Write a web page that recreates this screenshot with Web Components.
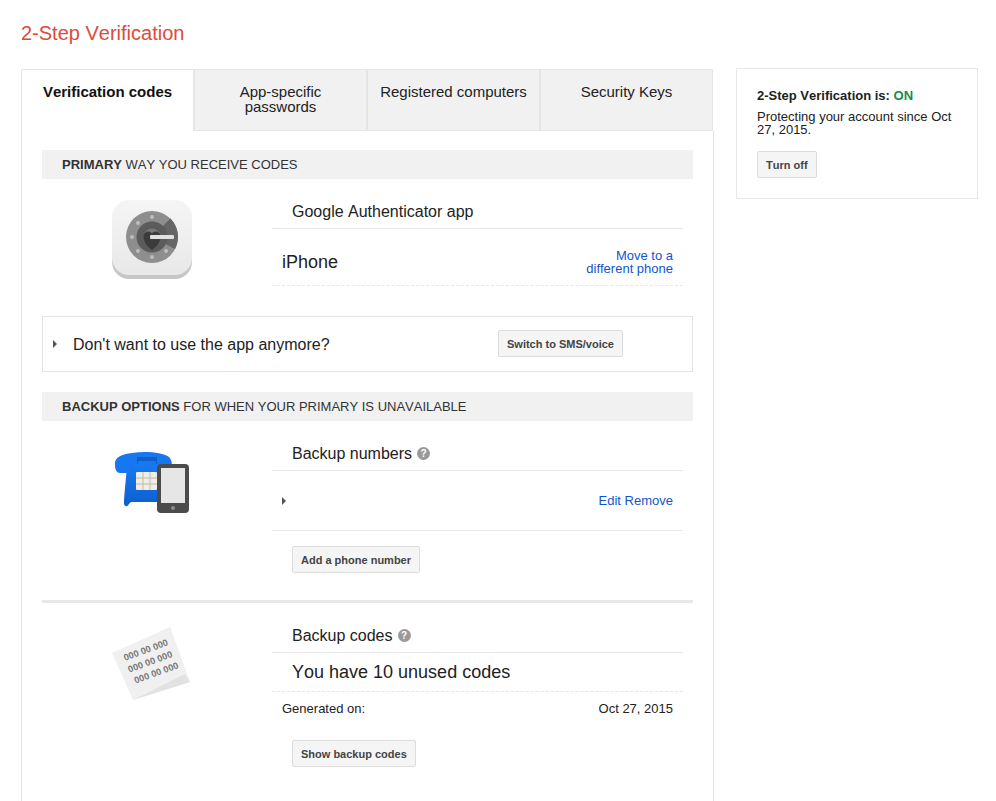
<!DOCTYPE html>
<html>
<head>
<meta charset="utf-8">
<title>2-Step Verification</title>
<style>
    html, body {
        margin: 0;
        height: 801px;
        overflow: hidden;
        background: #fff;
        font-family: "Liberation Sans", Arial, sans-serif;
        font-kerning: none;
        color: #222;
    }
    gv-status em { font-style: normal; color: #168a4f; }
</style>
</head>
<body>
<gv-page>
    <gv-tabs>
        <gv-tab active>Verification codes</gv-tab>
        <gv-tab>App-specific<br>passwords</gv-tab>
        <gv-tab>Registered computers</gv-tab>
        <gv-tab>Security Keys</gv-tab>
    </gv-tabs>

    <gv-card>
        <gv-section-header><b>PRIMARY</b> WAY YOU RECEIVE CODES</gv-section-header>
        <gv-method>
            <svg slot="icon" width="80" height="80" viewBox="0 0 80 80">
                <defs>
                    <linearGradient id="face" x1="0" y1="0" x2="0" y2="1">
                        <stop offset="0" stop-color="#f5f5f5"/>
                        <stop offset="1" stop-color="#e8e8e8"/>
                    </linearGradient>
                </defs>
                <rect x="0" y="3" width="80" height="76" rx="17" fill="#c6c6c6"/>
                <rect x="0" y="0" width="80" height="75" rx="17" fill="url(#face)"/>
                <circle cx="40" cy="37" r="26" fill="#8e8e8e"/>
                <path d="M58.400 18.600A26 26 0 0 1 63 49L40 37Z" fill="#656565"/>
                <g fill="#bdbdbd">
                    <circle cx="40" cy="17" r="2"/><circle cx="40" cy="57" r="2"/>
                    <circle cx="20" cy="37" r="2"/><circle cx="26" cy="23" r="2"/>
                    <circle cx="26" cy="51" r="2"/><circle cx="54" cy="51" r="2"/>
                </g>
                <circle cx="40" cy="37" r="15.500" fill="#5b5b5b"/>
                <circle cx="40" cy="37" r="8.500" fill="#777"/>
                <path d="M31.500 36C32 31 38 30 40 33.500C42 30 48 31 48.500 36C49 42 44 47 40 50C36 47 31 42 31.500 36Z" fill="#3b3b3b"/>
                <rect x="38" y="35" width="24" height="4" rx="1" fill="#e0e0e0"/>
            </svg>
            <gv-heading>Google Authenticator app</gv-heading>
            <gv-row dashed height="56" style="padding-top:10px;height:46px">
                <span class="large">iPhone</span>
                <gv-link slot="end">Move to a<br>different phone</gv-link>
            </gv-row>
        </gv-method>

        <gv-box>
            <gv-arrow></gv-arrow>
            <span>Don't want to use the app anymore?</span>
            <gv-button slot="action">Switch to SMS/voice</gv-button>
        </gv-box>

        <gv-section-header style="margin-top:20px"><b>BACKUP OPTIONS</b> FOR WHEN YOUR PRIMARY IS UNAVAILABLE</gv-section-header>
        <gv-method>
            <svg slot="icon" width="80" height="80" viewBox="0 0 80 80">
                <defs>
                    <linearGradient id="blue" x1="0" y1="0" x2="0" y2="1">
                        <stop offset="0" stop-color="#1b7bf0"/>
                        <stop offset="1" stop-color="#0c5fce"/>
                    </linearGradient>
                </defs>
                <path d="M15 26C18 24 20 22 22 20H48L60 28V60H20C18 60 17 62 16 63.500C14 65 12 64 12 61C12 56 14 34 15 26Z" fill="url(#blue)"/>
                <path d="M3 23C2 15 10 12 20 11C33 9 50 10 57 15C60 18 60 22 60 26H50C47 26 46 24 46 21H22C22 26 20 31 16 31H8C5 31 3 28 3 23Z" fill="#1677ee"/>
                <rect x="25" y="15" width="20" height="7" fill="#0f5fc8"/>
                <rect x="26" y="19" width="18" height="4" fill="#1677ee"/>
                <rect x="24" y="30" width="21" height="18" rx="1" fill="#efeee6"/>
                <path d="M24 36H45M24 42H45M31 30V48M38 30V48" stroke="#bdbbae" stroke-width="1"/>
                <rect x="45" y="22" width="32" height="49" rx="4" fill="#4b4b4b"/>
                <rect x="49" y="26" width="24" height="35" fill="#e6e6e6"/>
                <circle cx="61" cy="66" r="2" fill="#8a8a8a"/>
            </svg>
            <gv-heading>Backup numbers <gv-help></gv-help></gv-heading>
            <gv-row height="59">
                <gv-arrow></gv-arrow>
                <gv-link slot="end">Edit Remove</gv-link>
            </gv-row>
            <gv-button style="margin:15px 0 0 20px">Add a phone number</gv-button>
        </gv-method>

        <gv-divider></gv-divider>

        <gv-method>
            <svg slot="icon" width="80" height="80" viewBox="0 0 80 80">
                <polygon points="0,29 58,3 78,58 21,76" fill="#f0f0f0"/>
                <polygon points="21,76 78,58 73,50" fill="#e2e2e2"/>
                <g transform="translate(13 37) rotate(-20)" font-family="Liberation Sans, Arial, sans-serif" font-size="9.300" font-weight="700" fill="#777">
                    <text x="0" y="0">000 00 000</text>
                    <text x="0" y="12.500">000 00 000</text>
                    <text x="2" y="25">000 00 000</text>
                </g>
            </svg>
            <gv-heading>Backup codes <gv-help></gv-help></gv-heading>
            <gv-row dashed height="38">
                <span class="large indent">You have 10 unused codes</span>
            </gv-row>
            <gv-row height="33" plain>
                <span class="small">Generated on:</span>
                <span slot="end" class="small">Oct 27, 2015</span>
            </gv-row>
            <gv-button style="margin:15px 0 0 20px">Show backup codes</gv-button>
        </gv-method>
    </gv-card>

    <gv-status slot="side">
        <b>2-Step Verification is: <em>ON</em></b>
        <p>Protecting your account since Oct 27, 2015.</p>
        <gv-button>Turn off</gv-button>
    </gv-status>
</gv-page>

<script>
    class GvPage extends HTMLElement {
        constructor() {
            super();
            this.attachShadow({mode: "open"}).innerHTML = `
                <style>
                    :host { display: block; padding: 20px 18px 0 21px; }
                    h1 {
                        margin: 0 0 23px;
                        height: 26px;
                        line-height: 26px;
                        font-size: 20px;
                        font-weight: normal;
                        color: #dd4b39;
                    }
                    .columns { display: flex; align-items: flex-start; }
                    .main { width: 693px; flex: none; }
                    .side { width: 242px; margin: -1px 0 0 22px; flex: none; }
                </style>
                <h1>2-Step Verification</h1>
                <div class="columns">
                    <div class="main"><slot></slot></div>
                    <div class="side"><slot name="side"></slot></div>
                </div>`;
        }
    }

    class GvTabs extends HTMLElement {
        constructor() {
            super();
            this.attachShadow({mode: "open"}).innerHTML = `
                <style>
                    :host { display: flex; height: 62px; }
                </style>
                <slot></slot>`;
        }
    }

    class GvTab extends HTMLElement {
        constructor() {
            super();
            this.attachShadow({mode: "open"}).innerHTML = `
                <style>
                    :host {
                        display: block;
                        box-sizing: border-box;
                        width: 173px;
                        padding-top: 14px;
                        background: #f1f1f1;
                        border: 1px solid #e5e5e5;
                        font-size: 15px;
                        line-height: 15px;
                        text-align: center;
                        color: #222;
                    }
                    :host([active]) {
                        background: #fff;
                        border-bottom: 0;
                        font-weight: bold;
                        color: #111;
                    }
                </style>
                <slot></slot>`;
        }
    }

    class GvCard extends HTMLElement {
        constructor() {
            super();
            this.attachShadow({mode: "open"}).innerHTML = `
                <style>
                    :host {
                        display: block;
                        box-sizing: border-box;
                        width: 693px;
                        height: 670px;
                        padding: 19px 20px 0;
                        border: solid #e5e5e5;
                        border-width: 0 1px;
                    }
                </style>
                <slot></slot>`;
        }
    }

    class GvSectionHeader extends HTMLElement {
        constructor() {
            super();
            this.attachShadow({mode: "open"}).innerHTML = `
                <style>
                    :host {
                        display: block;
                        height: 29px;
                        padding-left: 20px;
                        background: #f1f1f1;
                        font-size: 13px;
                        line-height: 29px;
                        color: #333;
                    }
                </style>
                <slot></slot>`;
        }
    }

    class GvMethod extends HTMLElement {
        constructor() {
            super();
            this.attachShadow({mode: "open"}).innerHTML = `
                <style>
                    :host { display: flex; width: 641px; }
                    .icon { width: 160px; flex: none; padding: 21px 0 0 70px; }
                    .body { width: 411px; flex: none; padding-top: 16px; }
                    ::slotted(svg) { display: block; }
                </style>
                <div class="icon"><slot name="icon"></slot></div>
                <div class="body"><slot></slot></div>`;
        }
    }

    class GvHeading extends HTMLElement {
        constructor() {
            super();
            this.attachShadow({mode: "open"}).innerHTML = `
                <style>
                    :host {
                        display: flex;
                        align-items: center;
                        gap: 5px;
                        height: 33px;
                        padding-left: 20px;
                        border-bottom: 1px solid #e8e8e8;
                        font-size: 16px;
                        color: #222;
                    }
                </style>
                <slot></slot>`;
        }
    }

    class GvRow extends HTMLElement {
        constructor() {
            super();
            const height = this.getAttribute("height") || 56;
            this.attachShadow({mode: "open"}).innerHTML = `
                <style>
                    :host {
                        display: flex;
                        align-items: center;
                        justify-content: space-between;
                        height: ${height}px;
                        padding: 0 10px;
                        border-bottom: 1px solid #e8e8e8;
                    }
                    :host([dashed]) { border-bottom-style: dashed; }
                    :host([plain]) { border-bottom: 0; }
                    ::slotted(.large) { font-size: 18px; color: #222; }
                    ::slotted(.indent) { margin-left: 10px; }
                    ::slotted(.small) { font-size: 13px; color: #222; }
                </style>
                <slot></slot>
                <slot name="end"></slot>`;
        }
    }

    class GvLink extends HTMLElement {
        constructor() {
            super();
            this.attachShadow({mode: "open"}).innerHTML = `
                <style>
                    :host {
                        display: block;
                        font-size: 13px;
                        line-height: 13px;
                        text-align: right;
                        color: #1155cc;
                        cursor: pointer;
                    }
                </style>
                <slot></slot>`;
        }
    }

    class GvBox extends HTMLElement {
        constructor() {
            super();
            this.attachShadow({mode: "open"}).innerHTML = `
                <style>
                    :host {
                        display: flex;
                        align-items: center;
                        box-sizing: border-box;
                        height: 56px;
                        margin-top: 30px;
                        padding-left: 10px;
                        border: 1px solid #e5e5e5;
                        font-size: 16px;
                        color: #222;
                    }
                    .label { display: flex; align-items: center; gap: 16px; width: 445px; flex: none; }
                    ::slotted(span) { padding-top: 2px; }
                    ::slotted(gv-button) { margin-bottom: 2px; }
                </style>
                <div class="label"><slot></slot></div>
                <slot name="action"></slot>`;
        }
    }

    class GvArrow extends HTMLElement {
        constructor() {
            super();
            this.attachShadow({mode: "open"}).innerHTML = `
                <style>
                    :host {
                        display: block;
                        width: 0;
                        height: 0;
                        border-left: 4px solid #555;
                        border-top: 4px solid transparent;
                        border-bottom: 4px solid transparent;
                    }
                </style>`;
        }
    }

    class GvHelp extends HTMLElement {
        constructor() {
            super();
            this.attachShadow({mode: "open"}).innerHTML = `
                <style>
                    :host {
                        display: inline-block;
                        width: 13px;
                        height: 13px;
                        border-radius: 50%;
                        background: #999;
                        color: #fff;
                        font-size: 10px;
                        font-weight: bold;
                        line-height: 13px;
                        text-align: center;
                    }
                </style>?`;
        }
    }

    class GvButton extends HTMLElement {
        constructor() {
            super();
            this.attachShadow({mode: "open"}).innerHTML = `
                <style>
                    :host {
                        display: block;
                        box-sizing: border-box;
                        width: fit-content;
                        height: 27px;
                        padding: 0 8px;
                        background: #f5f5f5;
                        border: 1px solid #dcdcdc;
                        border-radius: 2px;
                        font-size: 11px;
                        font-weight: bold;
                        line-height: 26px;
                        color: #444;
                        white-space: nowrap;
                        cursor: default;
                    }
                </style>
                <slot></slot>`;
        }
    }

    class GvDivider extends HTMLElement {
        constructor() {
            super();
            this.attachShadow({mode: "open"}).innerHTML = `
                <style>
                    :host { display: block; height: 3px; margin-top: 27px; background: #e8e8e8; }
                </style>`;
        }
    }

    class GvStatus extends HTMLElement {
        constructor() {
            super();
            this.attachShadow({mode: "open"}).innerHTML = `
                <style>
                    :host {
                        display: block;
                        box-sizing: border-box;
                        height: 131px;
                        padding: 19px 20px 0;
                        border: 1px solid #e8e8e8;
                        font-size: 13px;
                        line-height: 15px;
                        color: #222;
                    }
                    ::slotted(b) { display: block; }
                    ::slotted(p) { margin: 7px 0 15px; line-height: 13px; }
                </style>
                <slot></slot>`;
        }
    }

    customElements.define("gv-page", GvPage);
    customElements.define("gv-tabs", GvTabs);
    customElements.define("gv-tab", GvTab);
    customElements.define("gv-card", GvCard);
    customElements.define("gv-section-header", GvSectionHeader);
    customElements.define("gv-method", GvMethod);
    customElements.define("gv-heading", GvHeading);
    customElements.define("gv-row", GvRow);
    customElements.define("gv-link", GvLink);
    customElements.define("gv-box", GvBox);
    customElements.define("gv-arrow", GvArrow);
    customElements.define("gv-help", GvHelp);
    customElements.define("gv-button", GvButton);
    customElements.define("gv-divider", GvDivider);
    customElements.define("gv-status", GvStatus);
</script>
</body>
</html>
